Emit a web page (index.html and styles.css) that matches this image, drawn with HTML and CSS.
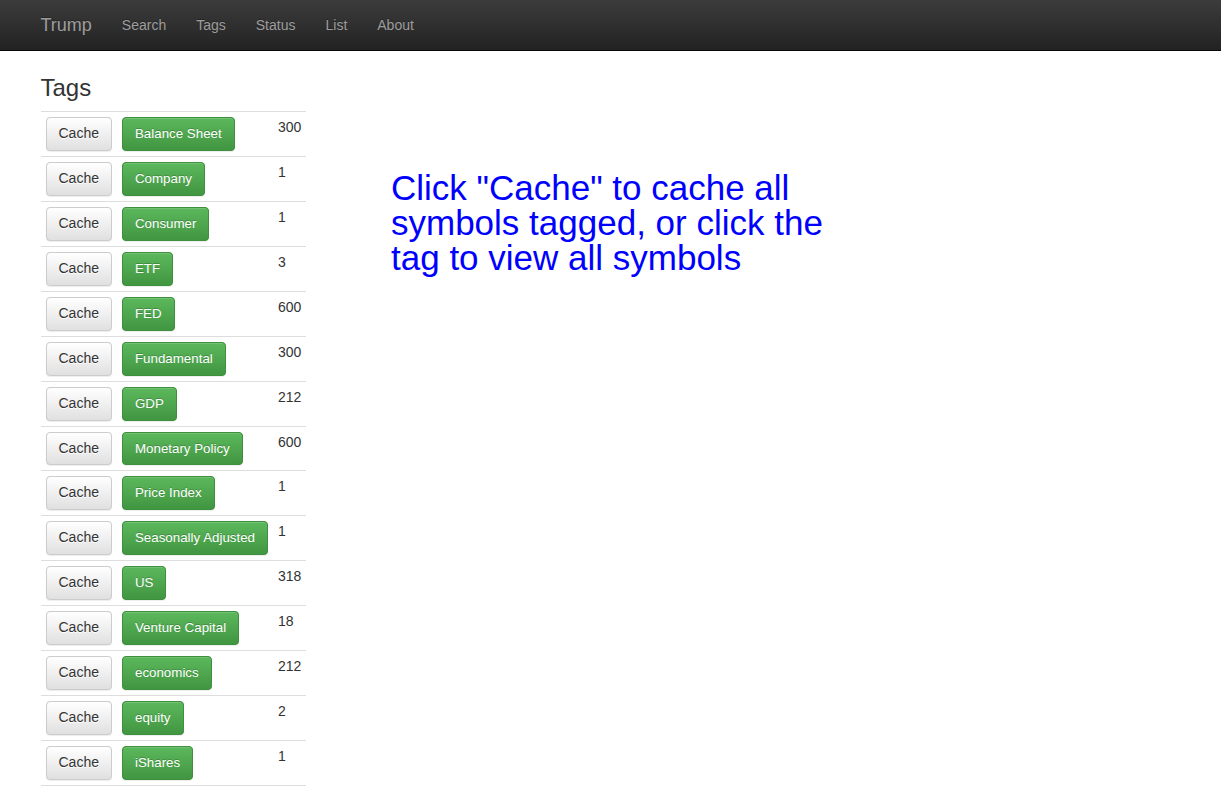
FILE: index.html
```html
<!DOCTYPE html>
<html>
<head>
<meta charset="utf-8">
<title>Trump - Tags</title>
<link rel="stylesheet" href="styles.css">
</head>
<body>
<nav class="navbar">
  <div class="container nav-inner">
    <a class="brand" href="#">Trump</a>
    <ul class="nav">
      <li><a href="#">Search</a></li>
      <li><a href="#">Tags</a></li>
      <li><a href="#">Status</a></li>
      <li><a href="#">List</a></li>
      <li><a href="#">About</a></li>
    </ul>
  </div>
</nav>
<main class="container main">
  <div class="row">
    <div class="col-left">
      <h3 class="title">Tags</h3>
      <table class="tags">
        <tbody>
          <tr><td><button class="btn btn-default">Cache</button></td><td><button class="btn btn-success">Balance Sheet</button></td><td>300</td></tr>
          <tr><td><button class="btn btn-default">Cache</button></td><td><button class="btn btn-success">Company</button></td><td>1</td></tr>
          <tr><td><button class="btn btn-default">Cache</button></td><td><button class="btn btn-success">Consumer</button></td><td>1</td></tr>
          <tr><td><button class="btn btn-default">Cache</button></td><td><button class="btn btn-success">ETF</button></td><td>3</td></tr>
          <tr><td><button class="btn btn-default">Cache</button></td><td><button class="btn btn-success">FED</button></td><td>600</td></tr>
          <tr><td><button class="btn btn-default">Cache</button></td><td><button class="btn btn-success">Fundamental</button></td><td>300</td></tr>
          <tr><td><button class="btn btn-default">Cache</button></td><td><button class="btn btn-success">GDP</button></td><td>212</td></tr>
          <tr><td><button class="btn btn-default">Cache</button></td><td><button class="btn btn-success">Monetary Policy</button></td><td>600</td></tr>
          <tr><td><button class="btn btn-default">Cache</button></td><td><button class="btn btn-success">Price Index</button></td><td>1</td></tr>
          <tr><td><button class="btn btn-default">Cache</button></td><td><button class="btn btn-success">Seasonally Adjusted</button></td><td>1</td></tr>
          <tr><td><button class="btn btn-default">Cache</button></td><td><button class="btn btn-success">US</button></td><td>318</td></tr>
          <tr><td><button class="btn btn-default">Cache</button></td><td><button class="btn btn-success">Venture Capital</button></td><td>18</td></tr>
          <tr><td><button class="btn btn-default">Cache</button></td><td><button class="btn btn-success">economics</button></td><td>212</td></tr>
          <tr><td><button class="btn btn-default">Cache</button></td><td><button class="btn btn-success">equity</button></td><td>2</td></tr>
          <tr><td><button class="btn btn-default">Cache</button></td><td><button class="btn btn-success">iShares</button></td><td>1</td></tr>
          <tr><td><button class="btn btn-default">Cache</button></td><td><button class="btn btn-success">treasury</button></td><td>1</td></tr>
        </tbody>
      </table>
    </div>
    <div class="col-right">
      <p class="hint">Click "Cache" to cache all symbols tagged, or click the tag to view all symbols</p>
    </div>
  </div>
</main>
</body>
</html>
```

FILE: styles.css
```css
html, body {
  margin: 0;
  padding: 0;
}
body {
  font-family: "Liberation Sans", Arial, sans-serif;
  font-size: 14px;
  line-height: 1.42857143;
  color: #333;
  background: #fff;
}
.container {
  width: 1170px;
  margin: 0 auto;
  padding: 0 15px;
  box-sizing: border-box;
}
.navbar {
  height: 50px;
  background-color: #222;
  background-image: linear-gradient(to bottom, #3c3c3c 0, #222 100%);
  border-bottom: 1px solid #080808;
}
.nav-inner {
  display: flex;
  align-items: stretch;
  height: 50px;
}
.brand {
  display: block;
  padding: 15px 15px 15px 0;
  font-size: 18px;
  line-height: 20px;
  color: #9d9d9d;
  text-decoration: none;
  text-shadow: 0 -1px 0 rgba(0,0,0,.25);
}
.nav {
  display: flex;
  list-style: none;
  margin: 0;
  padding: 0;
}
.nav a {
  display: block;
  padding: 15px;
  line-height: 20px;
  font-size: 14px;
  color: #9d9d9d;
  text-decoration: none;
  text-shadow: 0 -1px 0 rgba(0,0,0,.25);
}
.main {
  padding-top: 4px;
}
.row {
  display: flex;
  margin: 0 -15px;
}
.col-left {
  width: 292.5px;
  padding: 0 15px;
  box-sizing: border-box;
  flex: none;
}
.col-right {
  padding: 0 15px;
  flex: 1;
}
.title {
  margin: 20px 0 10px;
  font-size: 24px;
  font-weight: 500;
  line-height: 1.1;
  color: #333;
}
.tags {
  width: 100%;
  border-collapse: collapse;
  border-spacing: 0;
}
.tags td {
  padding: 5px;
  border-top: 1px solid #ddd;
  vertical-align: top;
  line-height: 1.42857143;
  white-space: nowrap;
}
.btn {
  display: inline-block;
  margin: 0;
  padding: 6px 12px;
  font-family: "Liberation Sans", Arial, sans-serif;
  font-size: 14px;
  line-height: 19.87px;
  font-weight: 400;
  border: 1px solid transparent;
  border-radius: 4px;
  cursor: pointer;
  vertical-align: middle;
  white-space: nowrap;
}
.btn-default {
  color: #333;
  background-color: #e0e0e0;
  background-image: linear-gradient(to bottom, #fff 0, #e0e0e0 100%);
  border-color: #ccc;
  text-shadow: 0 1px 0 #fff;
  box-shadow: inset 0 1px 0 rgba(255,255,255,.15), 0 1px 1px rgba(0,0,0,.075);
}
.btn-success {
  font-size: 13.3333px;
  color: #fff;
  background-color: #419641;
  background-image: linear-gradient(to bottom, #5cb85c 0, #419641 100%);
  border-color: #3e8f3e;
  text-shadow: 0 -1px 0 rgba(0,0,0,.2);
  box-shadow: inset 0 1px 0 rgba(255,255,255,.15), 0 1px 1px rgba(0,0,0,.075);
}
.hint {
  margin: 115px 0 0 58px;
  max-width: 460px;
  font-size: 35px;
  line-height: 35px;
  color: #00f;
}
```
